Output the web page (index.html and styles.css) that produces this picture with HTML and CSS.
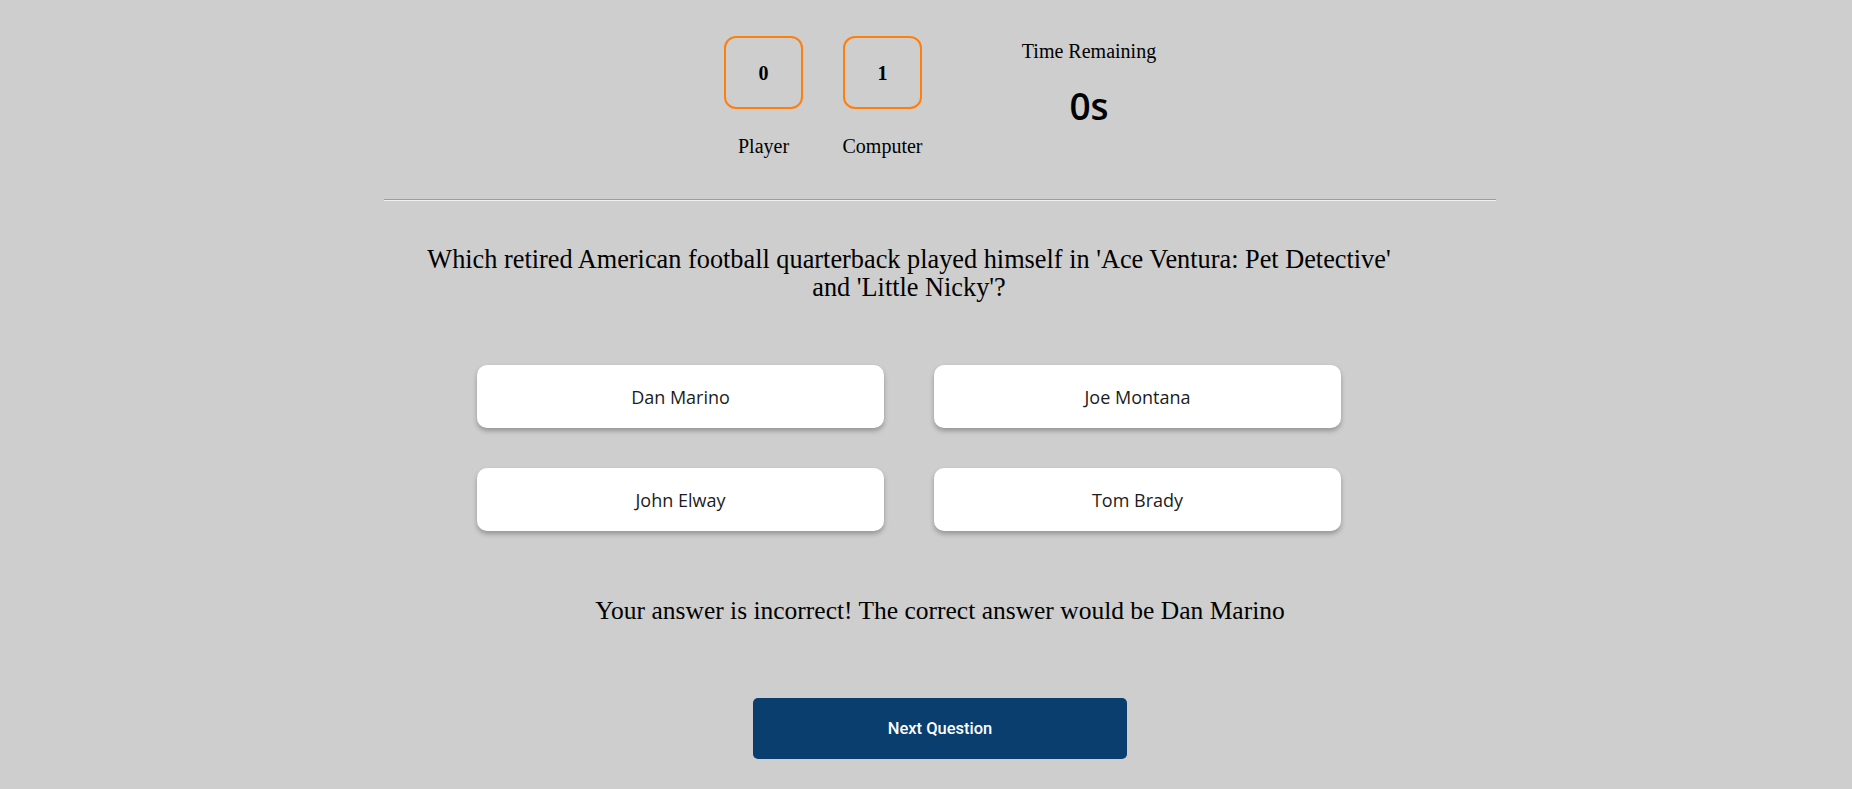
FILE: index.html
```html
<!DOCTYPE html>
<html lang="en">
<head>
<meta charset="utf-8">
<title>Trivia</title>
<link rel="stylesheet" href="styles.css">
</head>
<body>
<main class="page">
  <header class="scoreboard">
    <div class="score">
      <div class="score-box">0</div>
      <div class="score-label">Player</div>
    </div>
    <div class="score">
      <div class="score-box">1</div>
      <div class="score-label">Computer</div>
    </div>
    <div class="timer">
      <div class="timer-label">Time Remaining</div>
      <div class="timer-value">0s</div>
    </div>
  </header>
  <hr class="divider">
  <section class="quiz">
    <p class="question">Which retired American football quarterback played himself in 'Ace Ventura: Pet Detective' and 'Little Nicky'?</p>
    <div class="answers">
      <button class="answer">Dan Marino</button>
      <button class="answer">Joe Montana</button>
      <button class="answer">John Elway</button>
      <button class="answer">Tom Brady</button>
    </div>
  </section>
  <p class="feedback">Your answer is incorrect! The correct answer would be Dan Marino</p>
  <div class="actions">
    <button class="next">Next Question</button>
  </div>
</main>
</body>
</html>
```
FILE: styles.css
```css
html, body {
  margin: 0;
  padding: 0;
  background: #cecece;
}

body {
  font-family: "Liberation Serif", "Times New Roman", serif;
  color: #000;
}

.page {
  padding-left: 28px;
  display: flex;
  flex-direction: column;
  align-items: center;
}

.scoreboard {
  display: flex;
  align-items: flex-start;
  padding-top: 36px;
}

.score {
  display: flex;
  flex-direction: column;
  align-items: center;
  width: 79px;
  margin-right: 40px;
}

.score:nth-child(2) {
  margin-right: 100px;
}

.score-box {
  box-sizing: border-box;
  width: 79px;
  height: 73px;
  border: 2px solid #ff7f0e;
  border-radius: 12px;
  display: flex;
  align-items: center;
  justify-content: center;
  padding-top: 2px;
  font-weight: bold;
  font-size: 20px;
}

.score-label {
  margin-top: 26px;
  font-size: 20px;
  line-height: 23px;
  white-space: nowrap;
}

.timer {
  display: flex;
  flex-direction: column;
  align-items: center;
  width: 134px;
  padding-top: 4px;
}

.timer-label {
  font-size: 20px;
  line-height: 23px;
  white-space: nowrap;
}

.timer-value {
  margin-top: 19px;
  font-family: "Open Sans", "Noto Sans", sans-serif;
  font-weight: 600;
  font-size: 37px;
  line-height: 48px;
}

.divider {
  width: 1112px;
  margin: 41px 0 0 0;
  border: 0;
  border-top: 1px solid #9c9c9c;
  border-bottom: 1px solid #f2f2f2;
  height: 0;
}

.quiz {
  display: flex;
  flex-direction: column;
  align-items: center;
  padding-right: 62px;
}

.question {
  margin: 45px 0 0 0;
  width: 990px;
  text-align: center;
  font-size: 26.3px;
  line-height: 28px;
}

.answers {
  margin-top: 63px;
  display: grid;
  grid-template-columns: 407px 407px;
  column-gap: 50px;
  row-gap: 40px;
}

.answer {
  height: 63px;
  border: 0;
  border-radius: 10px;
  background: #fff;
  box-shadow: 0 3px 5px rgba(0, 0, 0, 0.28);
  font-family: "Open Sans", "Noto Sans", sans-serif;
  font-size: 18px;
  color: #1c1c1c;
  padding: 0;
}

.feedback {
  margin: 66px 0 0 0;
  font-size: 25.5px;
  line-height: 28px;
  text-align: center;
}

.actions {
  margin-top: 73px;
}

.next {
  width: 374px;
  height: 61px;
  border: 0;
  border-radius: 5px;
  background: #0a3e6f;
  color: #fff;
  font-family: Roboto, "Liberation Sans", Arial, sans-serif;
  font-weight: 500;
  font-size: 16.5px;
  padding: 0;
}
```
